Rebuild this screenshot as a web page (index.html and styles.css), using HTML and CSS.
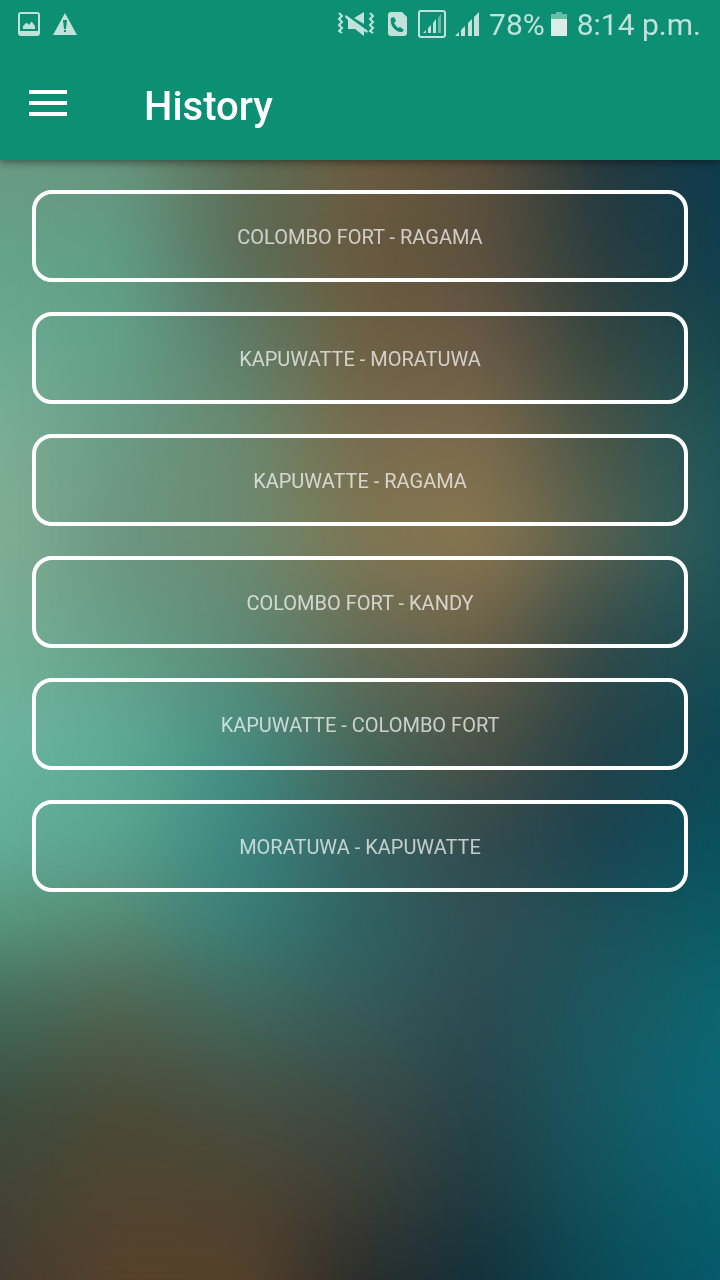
FILE: index.html
```html
<!DOCTYPE html>
<html lang="en">
<head>
<meta charset="utf-8">
<meta name="viewport" content="width=device-width, initial-scale=1">
<title>History</title>
<link rel="stylesheet" href="styles.css">
</head>
<body>
<header class="app-bar">
  <div class="status">
    <div class="status-group notices">
      <svg width="22" height="24" viewBox="0 0 22 24" aria-hidden="true"><path fill="currentColor" fill-rule="evenodd" d="M3 0H19Q22 0 22 3V21Q22 24 19 24H3Q0 24 0 21V3Q0 0 3 0ZM2 2V19H20V2Z"/><path fill="currentColor" d="M5 17V14L8 11H9L11 13L13 10H14L17 14V17Z"/></svg>
      <svg width="24" height="22" viewBox="0 0 24 22" aria-hidden="true"><path fill="currentColor" fill-rule="evenodd" d="M12 0L24 22H0ZM10 7L11 16H13L14 7ZM11 17V19H13V17Z"/></svg>
    </div>
    <div class="status-group system">
      <svg class="vibrate" width="37" height="26" viewBox="0 0 37 26" aria-hidden="true"><path fill="none" stroke="currentColor" stroke-width="2" d="M1 2L4 5L1 8L4 11L1 14L4 17L1 20L4 22M32 2L35 5L32 8L35 11L32 14L35 17L32 20L35 22"/><path fill="currentColor" d="M8 4L30 20L29 22L26 20V25L17 18H10V9L7 6ZM16 7L26 1V13Z"/></svg>
      <svg class="sim" width="19" height="24" viewBox="0 0 19 24" aria-hidden="true"><path fill="currentColor" d="M3 0H14L19 5V21Q19 24 16 24H3Q0 24 0 21V3Q0 0 3 0Z"/><path fill="#0c8f72" d="M3 6L6 5L8 9L6 11Q8 14 10 16L12 15L16 18L14 20C8 21 1 13 3 6Z"/></svg>
      <svg class="boxed" width="28" height="28" viewBox="0 0 28 28" aria-hidden="true"><rect x="1" y="1" width="26" height="26" rx="2" fill="none" stroke="currentColor" stroke-width="2"/><path fill="currentColor" d="M5 23L8 20V23ZM10 18L13 15V23H10ZM15 13L18 9V23H15Z"/><path fill="currentColor" opacity=".5" d="M20 8L23 4V23H20Z"/></svg>
      <svg class="signal" width="24" height="24" viewBox="0 0 24 24" aria-hidden="true"><path fill="currentColor" d="M0 24L4 20V24ZM6 18L10 14V24H6ZM13 11L17 7V24H13ZM19 5L24 0V24H19Z"/></svg>
      <span class="percent">78%</span>
      <svg class="battery" width="16" height="24" viewBox="0 0 16 24" aria-hidden="true"><path fill="#6bbca8" d="M0 2H5V0H11V2H16V7H0Z"/><path fill="#d9eee9" d="M0 7H16V24H0Z"/></svg>
      <time>8:14 p.m.</time>
    </div>
  </div>
  <div class="toolbar">
    <button class="menu" type="button" aria-label="Open menu">
      <svg width="38" height="26" viewBox="0 0 38 26" aria-hidden="true"><path fill="#fff" d="M0 0H38V4H0ZM0 11H38V15H0ZM0 22H38V26H0Z"/></svg>
    </button>
    <h1>History</h1>
  </div>
</header>
<main class="content">
  <div class="mesh" aria-hidden="true">
    <i class="m0"></i><i class="m1"></i><i class="m2"></i><i class="m3"></i><i class="m4"></i><i class="m5"></i><i class="m6"></i><i class="m7"></i><i class="m8"></i><i class="m9"></i><i class="m10"></i><i class="m11"></i><i class="m12"></i>
  </div>
  <div class="routes">
    <button type="button" class="route">COLOMBO FORT - RAGAMA</button>
    <button type="button" class="route">KAPUWATTE - MORATUWA</button>
    <button type="button" class="route">KAPUWATTE - RAGAMA</button>
    <button type="button" class="route">COLOMBO FORT - KANDY</button>
    <button type="button" class="route">KAPUWATTE - COLOMBO FORT</button>
    <button type="button" class="route">MORATUWA - KAPUWATTE</button>
  </div>
</main>
</body>
</html>
```

FILE: styles.css
```css
* { box-sizing: border-box; }

body {
  margin: 0;
  min-height: 100vh;
  display: flex;
  flex-direction: column;
  font-family: Roboto, "Noto Sans", sans-serif;
  background: #2a4246;
}

svg { display: block; flex: none; }

.app-bar {
  position: relative;
  z-index: 1;
  background: #0c8f72;
  color: #fff;
  box-shadow: 0 2px 8px rgba(0, 0, 0, .45);
}

.status {
  display: flex;
  justify-content: space-between;
  height: 50px;
  padding: 0 19px 0 18px;
  color: #bfe3da;
  font-size: 30px;
  line-height: 50px;
}

.status-group { display: flex; align-items: center; }
.notices { gap: 13px; padding-bottom: 2px; }
.sim { margin-left: 13px; }
.boxed { margin-left: 11px; }
.signal { margin-left: 9px; }
.percent { margin-left: 10px; }
.battery { margin: 0 10px 0 6px; }
.system svg { position: relative; bottom: 1px; }

.toolbar {
  display: flex;
  align-items: center;
  height: 110px;
  padding: 0 29px;
}

.menu {
  padding: 0 0 4px;
  margin-right: 77px;
  border: 0;
  background: none;
}

h1 {
  margin: 0;
  padding-top: 4px;
  font-size: 40px;
  font-weight: 500;
  line-height: 48px;
}

.content { position: relative; flex: 1; }

.routes {
  position: relative;
  display: flex;
  flex-direction: column;
  gap: 30px;
  padding: 30px 32px;
}

.route {
  height: 92px;
  padding: 2px 16px 0;
  border: 4px solid #fff;
  border-radius: 20px;
  background: none;
  color: rgba(255, 255, 255, .7);
  font: 20px/24px Roboto, "Noto Sans", sans-serif;
}

/* Colour mesh: each row is a horizontal gradient that fades in over the row above. */
.mesh { position: absolute; inset: 0; display: grid; overflow: hidden; }
.mesh i { grid-area: 1 / 1; mask-image: linear-gradient(transparent var(--from), #000 var(--to)); }
.mesh::after { content: ""; grid-area: 1 / 1; backdrop-filter: blur(24px); }
.mesh .m0 { mask-image: none; background: linear-gradient(90deg, #6b9a84, #68947c, #5f6f58, #6a5d42, #5c503c, #263a3e, #0e3c4f); }
.m1 { --from: 0%; --to: 8%; background: linear-gradient(90deg, #65a28c, #5f9d87, #5b6c57, #68593f, #5b503d, #2a3c3e, #0f3e50); }
.m2 { --from: 8%; --to: 16%; background: linear-gradient(90deg, #6caa94, #62a08b, #5c7c68, #6e6043, #685845, #37453f, #15474f); }
.m3 { --from: 16%; --to: 25%; background: linear-gradient(90deg, #7cb096, #6b9a83, #6a8a70, #786c4d, #7d6b4c, #485648, #1c555a); }
.m4 { --from: 25%; --to: 34%; background: linear-gradient(90deg, #82af95, #6b957f, #6c8a72, #7f7753, #89764f, #586050, #1e585c); }
.m5 { --from: 34%; --to: 43%; background: linear-gradient(90deg, #76b099, #679e88, #5e8a75, #666c57, #6b6048, #344a48, #184f57); }
.m6 { --from: 43%; --to: 52%; background: linear-gradient(90deg, #6cb59f, #5eab95, #468e82, #48685a, #4b5145, #264147, #0d4855); }
.m7 { --from: 52%; --to: 61%; background: linear-gradient(90deg, #64ae98, #59a38f, #3a857f, #376260, #33494c, #1a4350, #0a525f); }
.m8 { --from: 61%; --to: 68%; background: linear-gradient(90deg, #58967f, #578a74, #3a7f78, #2f6262, #305054, #1f5058, #0a5b66); }
.m9 { --from: 68%; --to: 75%; background: linear-gradient(90deg, #456f5e, #506652, #416a5f, #355c5c, #2b4c51, #1d565f, #0c666e); }
.m10 { --from: 75%; --to: 84%; background: linear-gradient(90deg, #3b4f40, #4b4a38, #475042, #3c4b46, #27444a, #175861, #0a6878); }
.m11 { --from: 84%; --to: 92%; background: linear-gradient(90deg, #434437, #4f4530, #4d4432, #3d3e37, #203b41, #11525d, #08626f); }
.m12 { --from: 92%; --to: 100%; background: linear-gradient(90deg, #433b31, #58412b, #56412b, #2a2c2b, #13303a, #0a4a57, #065a6a); }
```
